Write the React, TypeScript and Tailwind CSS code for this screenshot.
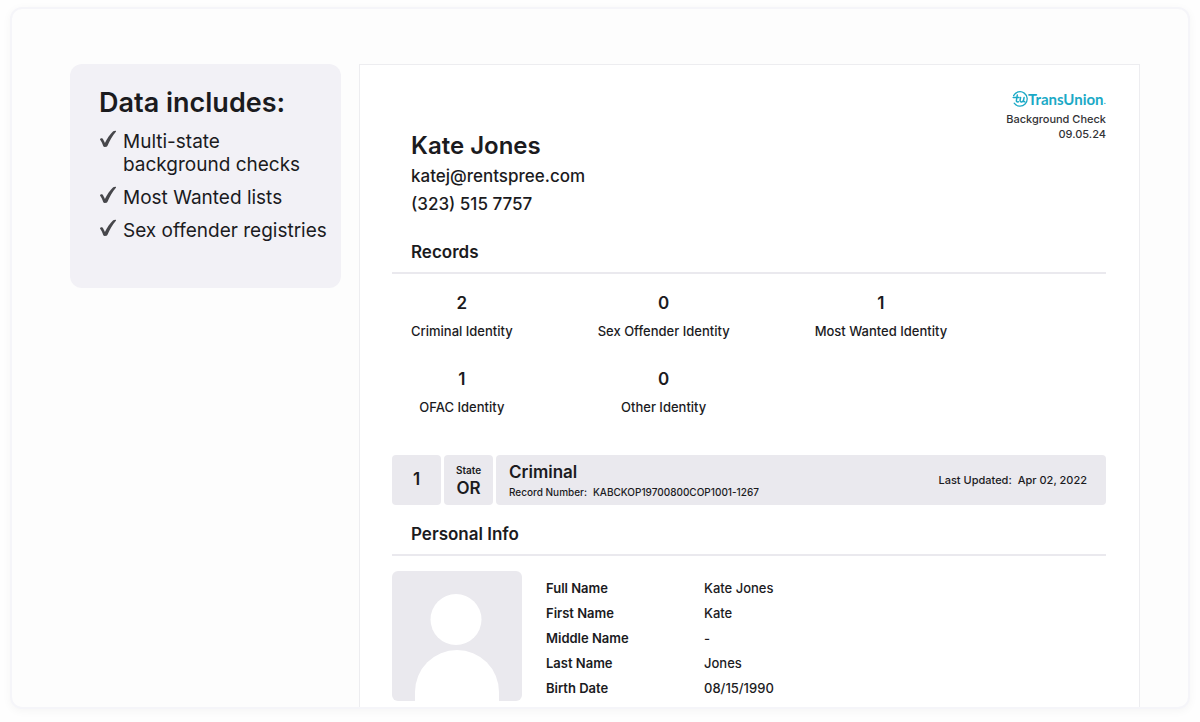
import React from 'react';

const included = ['Multi-state\nbackground checks', 'Most Wanted lists', 'Sex offender registries'];

const records = [
  { label: 'Criminal Identity', count: 2 },
  { label: 'Sex Offender Identity', count: 0 },
  { label: 'Most Wanted Identity', count: 1 },
  { label: 'OFAC Identity', count: 1 },
  { label: 'Other Identity', count: 0 },
];

const personalInfo = [
  ['Full Name', 'Kate Jones'],
  ['First Name', 'Kate'],
  ['Middle Name', '-'],
  ['Last Name', 'Jones'],
  ['Birth Date', '08/15/1990'],
];

const CheckMark: React.FC = () => (
  <svg className="h-[18px] w-[18px] shrink-0" viewBox="0 0 18 18" aria-hidden="true">
    <path
      d="M1 9.6C.9 8.4 2.6 7.7 3.5 8.6C4.3 9.5 5.1 11.3 5.9 12.9C8.1 8.6 11 4.3 14.2 1.3C15.2.5 17.4.4 17.1 1.4C13.5 5.700 10.700 10.600 8.500 15.700C8 17.200 4.800 17.300 4.200 15.900C3.400 13.800 2.400 11.400 1 9.600Z"
      fill="#47474b"
    />
  </svg>
);

const TransUnionLogo: React.FC = () => (
  <div className="flex items-center text-[#1ba9c6]">
    <svg className="h-4 w-4" viewBox="0 0 16 16" fill="none" stroke="currentColor" strokeLinecap="round" strokeLinejoin="round" aria-hidden="true">
      <path d="M1.600 4.600A7.200 7.200 0 1 1 2.200 12.200" strokeWidth="1.300" />
      <path d="M1.200 6.400H7M5.300 4L4.400 9.500Q4.300 11.300 6.300 10.800" strokeWidth="1.500" />
      <path d="M8.600 6.400L8.100 9.200Q8 11 9.600 10.900Q11.200 10.700 11.600 8.800L12.100 6.400M11.600 8.800Q11.300 10.900 12.700 10.700" strokeWidth="1.500" />
    </svg>
    <span className="font-['Lato',sans-serif] text-[15px] leading-4 font-bold">TransUnion</span>
    <span className="self-end text-[8px] leading-3">.</span>
  </div>
);

const Avatar: React.FC = () => (
  <svg className="h-[130px] w-[130px] shrink-0 rounded-md bg-[#eae9ee]" viewBox="0 0 130 130" role="img" aria-label="Kate Jones">
    <circle cx="64" cy="48.5" r="25.5" fill="#fff" />
    <path d="M23 130V121A42 42 0 0 1 107 121V130Z" fill="#fff" />
  </svg>
);

const SectionTitle: React.FC<{ children: React.ReactNode }> = ({ children }) => (
  <h2 className="border-b-2 border-[#eae9ee] pb-2 pl-[19px] text-[17px] leading-6 font-semibold">{children}</h2>
);

export default function App() {
  return (
    <main className="flex h-screen flex-col bg-[#fefefe] px-[10px] pt-[7px] pb-[13px] font-['Inter',sans-serif] text-[#1b1b1e]">
      <div className="flex min-h-0 flex-1 items-start gap-[18px] overflow-hidden rounded-xl border-2 border-[#f5f5f9] bg-[#fdfdfd] pt-[55px] pr-12 pl-[58px] shadow-[0_2px_10px_rgba(0,0,0,0.04)]">
        <aside className="w-[271px] shrink-0 rounded-xl bg-[#f2f1f6] pt-[23px] pr-2 pb-[46px] pl-[29px]">
          <h1 className="text-[27px] leading-8 font-semibold">Data includes:</h1>
          <ul className="mt-[11px] flex flex-col gap-[10px] text-[19px] leading-[23px]">
            {included.map((item) => (
              <li key={item} className="flex gap-[6px]">
                <CheckMark />
                <span className="whitespace-pre-line">{item}</span>
              </li>
            ))}
          </ul>
        </aside>

        <article className="min-w-0 flex-1 self-stretch border border-b-0 border-[#ededf0] bg-white pt-[26px] pr-[33px] pl-8">
          <header className="flex items-start justify-between">
            <div className="pt-[39px] pl-[19px]">
              <h2 className="text-[24px] leading-8 font-semibold">Kate Jones</h2>
              <p className="text-[17px] leading-7 font-medium">katej@rentspree.com</p>
              <p className="text-[17px] leading-7 font-medium">(323) 515 7757</p>
            </div>
            <div className="flex flex-col items-end text-[11px] leading-[15px] font-medium text-[#333336]">
              <TransUnionLogo />
              <p className="mt-[5px]">Background Check</p>
              <p>09.05.24</p>
            </div>
          </header>

          <section className="mt-[22px]">
            <SectionTitle>Records</SectionTitle>
            <dl className="mt-[17px] grid grid-cols-[auto_auto_auto] justify-start gap-x-[85px] gap-y-6 pl-[19px]">
              {records.map(({ label, count }) => (
                <div key={label} className="flex flex-col-reverse items-center gap-1">
                  <dt className="text-[13px] leading-6 font-medium">{label}</dt>
                  <dd className="text-[17px] leading-6 font-semibold">{count}</dd>
                </div>
              ))}
            </dl>
          </section>

          <section className="mt-9 flex gap-[3px]">
            <div className="flex h-[50px] w-[49px] items-center justify-center rounded bg-[#eae9ee] text-[17px] font-semibold">1</div>
            <div className="flex h-[50px] w-[49px] flex-col items-center justify-center rounded bg-[#eae9ee] font-semibold">
              <span className="text-[10px] leading-4">State</span>
              <span className="text-[17px] leading-5">OR</span>
            </div>
            <div className="flex h-[50px] flex-1 items-center justify-between rounded bg-[#eae9ee] pr-[19px] pl-[13px]">
              <div>
                <h3 className="text-[17px] leading-6 font-semibold">Criminal</h3>
                <p className="flex gap-[6px] text-[10px] leading-4 font-medium">
                  <span>Record Number:</span>
                  <span>KABCKOP19700800COP1001-1267</span>
                </p>
              </div>
              <p className="flex gap-[6px] text-[11px] font-medium">
                <span>Last Updated:</span>
                <span>Apr 02, 2022</span>
              </p>
            </div>
          </section>

          <section className="mt-[17px]">
            <SectionTitle>Personal Info</SectionTitle>
            <div className="mt-[15px] flex items-start gap-6">
              <Avatar />
              <table className="mt-[5px] text-left text-[13px] leading-[25px]">
                <tbody>
                  {personalInfo.map(([label, value]) => (
                    <tr key={label}>
                      <th scope="row" className="w-[158px] p-0 font-semibold">{label}</th>
                      <td className="p-0 font-medium">{value}</td>
                    </tr>
                  ))}
                </tbody>
              </table>
            </div>
          </section>
        </article>
      </div>
    </main>
  );
}
